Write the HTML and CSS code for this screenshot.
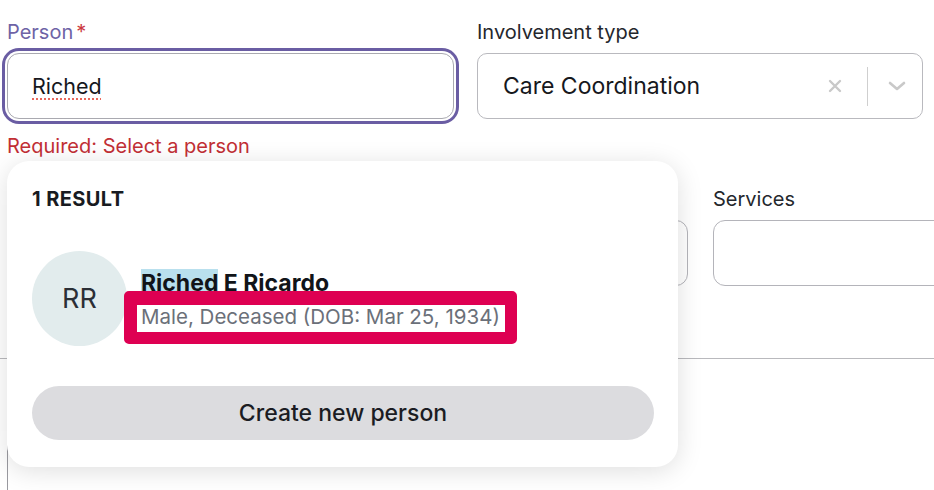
FILE: index.html
```html
<!DOCTYPE html>
<html>
<head>
<meta charset="utf-8">
<link rel="stylesheet" href="styles.css">
</head>
<body>
<div class="page">
  <div class="row row-top">
    <div class="field">
      <label class="label label-focus">Person<span class="req">*</span></label>
      <div class="input input-focus"><span class="typed">Riched</span></div>
      <div class="error">Required: Select a person</div>
    </div>
    <div class="field">
      <label class="label">Involvement type</label>
      <div class="select">
        <span class="select-value">Care Coordination</span>
        <span class="select-clear">
          <svg width="14" height="14" viewBox="0 0 14 14"><path d="M2 2 L12 12 M12 2 L2 12" stroke="#c9c9c9" stroke-width="2.4" stroke-linecap="round" fill="none"/></svg>
        </span>
        <span class="select-sep"></span>
        <span class="select-arrow">
          <svg width="18" height="10" viewBox="0 0 18 10"><path d="M2 2 L9 8 L16 2" stroke="#c9c9c9" stroke-width="2.6" stroke-linecap="round" stroke-linejoin="round" fill="none"/></svg>
        </span>
      </div>
    </div>
  </div>
  <div class="row row-second">
    <div class="field field-wide">
      <label class="label">&nbsp;</label>
      <div class="input"></div>
    </div>
    <div class="field field-services">
      <label class="label">Services</label>
      <div class="input"></div>
    </div>
  </div>
  <div class="divider"></div>
  <div class="notes"></div>

  <div class="popover">
    <div class="pop-title">1 RESULT</div>
    <div class="result">
      <div class="avatar">RR</div>
      <div class="result-text">
        <div class="result-name"><mark class="hl">Riched</mark> E Ricardo</div>
        <div class="result-meta">Male, Deceased (DOB: Mar 25, 1934)</div>
      </div>
    </div>
    <div class="create-btn">Create new person</div>
  </div>
</div>
</body>
</html>
```
FILE: styles.css
```css
* { box-sizing: border-box; }
html, body {
  margin: 0;
  padding: 0;
  background: #ffffff;
  overflow: hidden;
}
body {
  font-family: Inter, "Noto Sans", "Liberation Sans", sans-serif;
  color: #23262d;
}
.page {
  position: relative;
  width: 934px;
  height: 490px;
  overflow: hidden;
  padding: 21px 0 0 7px;
}
.row {
  display: flex;
}
.row-top {
  gap: 23px;
}
.field {
  display: flex;
  flex-direction: column;
  width: 447px;
  flex-shrink: 0;
}
.label {
  font-size: 20px;
  line-height: 23px;
  color: #24272d;
  margin-bottom: 9px;
}
.label-focus {
  color: #6e63a6;
}
.req {
  color: #cc3a3f;
  margin-left: 3px;
}
.input {
  height: 66px;
  border: 1px solid #b4b4ba;
  border-radius: 12px;
  background: #fff;
  display: flex;
  align-items: center;
  padding-left: 24px;
}
.input-focus {
  box-shadow: 0 0 0 2px #ffffff, 0 0 0 5px #6a5da3;
  border-color: #a9a9b0;
}
.typed {
  font-size: 21.5px;
  color: #16181d;
  text-decoration: underline dotted #e8685c;
  text-decoration-thickness: 2px;
  text-underline-offset: 4px;
}
.error {
  margin-top: 16px;
  font-size: 20px;
  line-height: 23px;
  color: #c22f35;
}
.select {
  height: 66px;
  width: 446px;
  border: 1px solid #b9b9be;
  border-radius: 10px;
  display: flex;
  align-items: center;
  padding-left: 25px;
}
.select-value {
  flex: 1;
  font-size: 23px;
  color: #16181d;
}
.select-clear {
  display: flex;
  width: 14px;
  margin-right: 25px;
}
.select-sep {
  width: 1.5px;
  height: 39px;
  background: #cfcfcf;
}
.select-arrow {
  display: flex;
  justify-content: center;
  width: 54px;
  padding-left: 3px;
}
.row-second {
  margin-top: 30px;
  gap: 25px;
}
.field-wide {
  width: 681px;
}
.field-services {
  width: 260px;
}
.divider {
  margin-top: 72px;
  margin-left: -7px;
  height: 1px;
  background: #b9b9bd;
}
.notes {
  margin-top: 60px;
  height: 140px;
  border-left: 1px solid #9a9aa0;
  width: 1px;
}
.popover {
  position: absolute;
  left: 7px;
  top: 161px;
  width: 671px;
  background: #fff;
  border-radius: 22px;
  box-shadow: 0 4px 26px rgba(0, 0, 0, 0.13);
  padding: 27px 24px 27px 25px;
}
.pop-title {
  font-size: 20px;
  line-height: 23px;
  font-weight: 700;
  color: #181b21;
  letter-spacing: 0.4px;
}
.result {
  display: flex;
  align-items: flex-start;
  margin-top: 40px;
}
.avatar {
  width: 95px;
  height: 95px;
  border-radius: 50%;
  background: #e2eced;
  color: #2b2f36;
  font-size: 27px;
  display: flex;
  align-items: center;
  justify-content: center;
  flex-shrink: 0;
}
.result-text {
  display: flex;
  flex-direction: column;
  align-items: flex-start;
  margin-left: 14px;
  margin-top: 19px;
}
.result-name {
  font-size: 23px;
  line-height: 26px;
  font-weight: 700;
  color: #111419;
}
.hl {
  background: #b9e0ee;
  color: inherit;
}
.result-meta {
  margin: -5px 0 0 -17px;
  border-style: solid;
  border-color: #de0052;
  border-width: 14px 12px 12px 13px;
  border-radius: 5px;
  background: #fff;
  padding: 0 5px 4px 4px;
  font-size: 20.5px;
  line-height: 23px;
  color: #6b7079;
}
.create-btn {
  margin-top: 40px;
  height: 54px;
  border-radius: 27px;
  background: #dcdcdf;
  display: flex;
  align-items: center;
  justify-content: center;
  font-size: 23px;
  font-weight: 500;
  color: #1b1c23;
}
```
